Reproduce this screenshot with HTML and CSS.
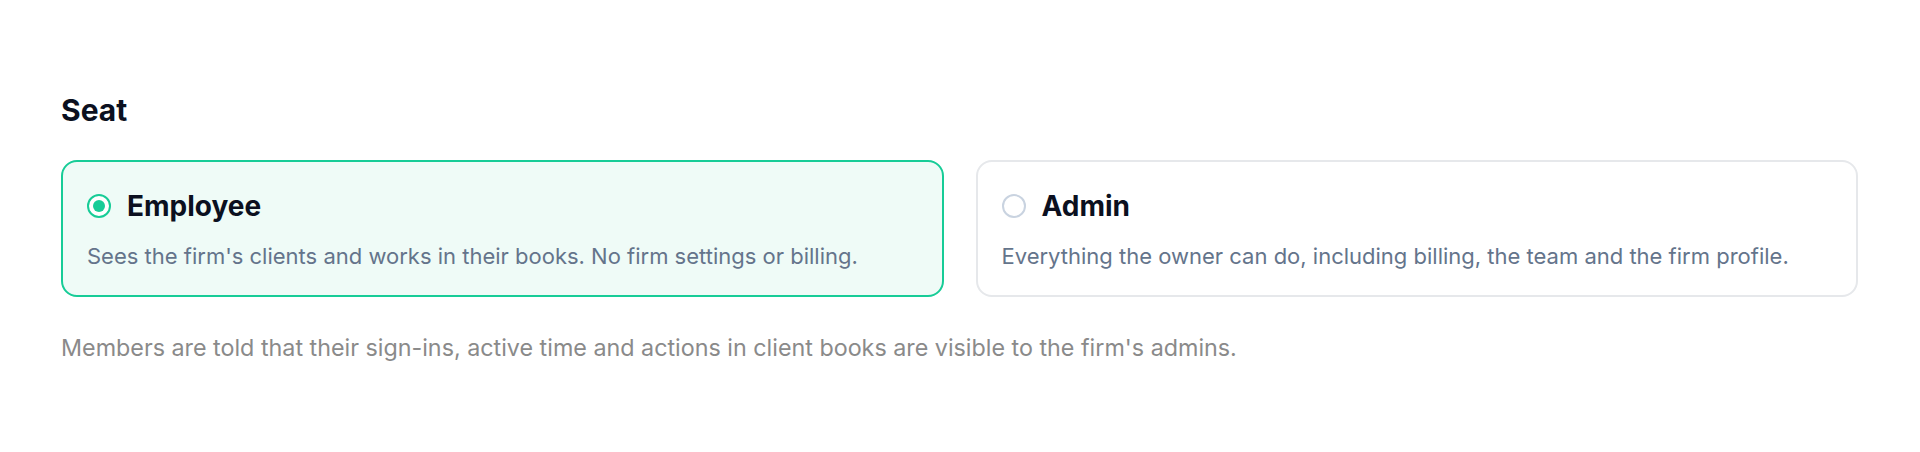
FILE: index.html
```html
<!DOCTYPE html>
<html lang="en">
<head>
<meta charset="utf-8">
<title>Seat</title>
<link rel="stylesheet" href="styles.css">
</head>
<body>
<main class="page">
  <h2 class="section-title">Seat</h2>
  <div class="seat-options" role="radiogroup">
    <label class="seat-card is-selected">
      <span class="seat-head">
        <span class="radio radio-on"><span class="radio-dot"></span></span>
        <span class="seat-name">Employee</span>
      </span>
      <span class="seat-desc">Sees the firm's clients and works in their books. No firm settings or billing.</span>
    </label>
    <label class="seat-card">
      <span class="seat-head">
        <span class="radio"></span>
        <span class="seat-name">Admin</span>
      </span>
      <span class="seat-desc">Everything the owner can do, including billing, the team and the firm profile.</span>
    </label>
  </div>
  <p class="note">Members are told that their sign-ins, active time and actions in client books are visible to the firm's admins.</p>
</main>
</body>
</html>
```

FILE: styles.css
```css
* { box-sizing: border-box; }

html, body {
  margin: 0;
  padding: 0;
  background: #ffffff;
}

body {
  font-family: Inter, "Noto Sans", "Liberation Sans", sans-serif;
  color: #0b1020;
}

.page {
  padding: 92px 62px 0 61px;
}

.section-title {
  margin: 0 0 32px;
  font-size: 30px;
  line-height: 36px;
  font-weight: 700;
  color: #0b1020;
}

.seat-options {
  display: flex;
  gap: 32px;
}

.seat-card {
  flex: 1 1 0;
  display: flex;
  flex-direction: column;
  gap: 15px;
  padding: 24px;
  border: 2px solid #e6e8eb;
  border-radius: 16px;
  background: #ffffff;
  cursor: pointer;
}

.seat-card.is-selected {
  border-color: #17cc97;
  background: #effbf7;
}

.seat-head {
  display: flex;
  align-items: center;
  gap: 16px;
  height: 40px;
}

.radio {
  flex: none;
  width: 24px;
  height: 24px;
  border-radius: 50%;
  border: 2.5px solid #c9d3e0;
  background: #ffffff;
  display: flex;
  align-items: center;
  justify-content: center;
}

.radio-on {
  border-color: #17cc97;
}

.radio-dot {
  width: 12px;
  height: 12px;
  border-radius: 50%;
  background: #17cc97;
}

.seat-name {
  font-size: 28px;
  line-height: 40px;
  font-weight: 700;
  color: #0b1020;
}

.seat-desc {
  font-size: 22px;
  line-height: 30px;
  color: #64748b;
}

.note {
  margin: 35px 0 0;
  font-size: 23.3px;
  line-height: 32px;
  color: #8a8a8a;
}
```
